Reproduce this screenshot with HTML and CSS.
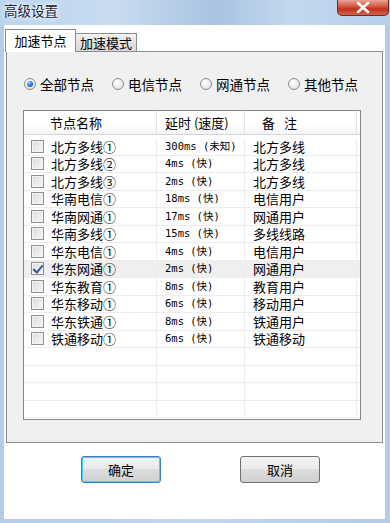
FILE: index.html
```html
<!DOCTYPE html>
<html lang="zh-CN">
<head>
    <meta charset="UTF-8">
    <meta name="viewport" content="width=device-width, initial-scale=1.0">
    <title>高级设置</title>
    <link rel="stylesheet" href="styles.css">
</head>
<body>
    <div class="window">
        <div class="titlebar">
            <div class="title">高级设置</div>
            <div class="close">
                <svg width="14" height="11" viewBox="0 0 14 11"><path d="M2 1 L12 10 M12 1 L2 10" stroke="#fff" stroke-width="2.6" stroke-linecap="round"/></svg>
            </div>
        </div>
        <div class="client">
            <div class="tabs">
                <div class="tab active">加速节点</div>
                <div class="tab">加速模式</div>
            </div>
            <div class="pane">
                <div class="radios">
                    <label class="option"><span class="radio checked"></span>全部节点</label>
                    <label class="option"><span class="radio"></span>电信节点</label>
                    <label class="option"><span class="radio"></span>网通节点</label>
                    <label class="option"><span class="radio"></span>其他节点</label>
                </div>
                <div class="list">
                    <div class="head">
                        <div class="hcell name">节点名称</div>
                        <div class="hcell delay">延时 (速度)</div>
                        <div class="hcell note">备 注</div>
                        <div class="hcell"></div>
                    </div>
                    <div class="rows" id="rows"></div>
                </div>
            </div>
            <div class="buttons">
                <div class="btn focus">确定</div>
                <div class="btn">取消</div>
            </div>
        </div>
    </div>

    <script>
const nodes = [
    ['北方多线①', '300ms (未知)', '北方多线'],
    ['北方多线②', '4ms (快)', '北方多线'],
    ['北方多线③', '2ms (快)', '北方多线'],
    ['华南电信①', '18ms (快)', '电信用户'],
    ['华南网通①', '17ms (快)', '网通用户'],
    ['华南多线①', '15ms (快)', '多线线路'],
    ['华东电信①', '4ms (快)', '电信用户'],
    ['华东网通①', '2ms (快)', '网通用户', true],
    ['华东教育①', '8ms (快)', '教育用户'],
    ['华东移动①', '6ms (快)', '移动用户'],
    ['华东铁通①', '8ms (快)', '铁通用户'],
    ['铁通移动①', '6ms (快)', '铁通移动']
];

const rows = document.getElementById('rows');

nodes.forEach(n => {
    const row = document.createElement('div');
    row.className = 'row' + (n[3] ? ' selected' : '');
    row.innerHTML =
        '<div class="cell name"><span class="check' + (n[3] ? ' on' : '') + '"></span>' + n[0] + '</div>' +
        '<div class="cell delay">' + n[1] + '</div>' +
        '<div class="cell note">' + n[2] + '</div>' +
        '<div class="cell"></div>';
    rows.appendChild(row);
});

// empty rows to fill the list
for (let i = 0; i < 4; i++) {
    const row = document.createElement('div');
    row.className = 'row';
    row.innerHTML = '<div class="cell"></div><div class="cell"></div><div class="cell"></div><div class="cell"></div>';
    rows.appendChild(row);
}
    </script>
</body>
</html>
```

FILE: styles.css
```css
body {
    margin: 0;
    font-family: "Noto Sans CJK SC", "Noto Sans", sans-serif;
    color: #000;
}
.window {
    width: 390px;
    height: 523px;
    box-sizing: border-box;
    display: flex;
    flex-direction: column;
    padding: 0 5px 4px 4px;
    background: linear-gradient(90deg, #b3cdea, #c2d7ee 50%, #b1cbe8);
}
.titlebar {
    height: 25px;
    flex: none;
    margin: 0 -5px 0 -4px;
    display: flex;
    justify-content: space-between;
    align-items: flex-start;
    background: linear-gradient(90deg, #bdd4ee 0%, #c9dcf0 30%, #a9c3e2 55%, #c4d8ef 75%, #b7cfea 100%);
}
.title {
    margin: 1px 0 0 4px;
    font-size: 13.5px;
    line-height: 18px;
    color: #1b2536;
    text-shadow: 0 0 6px #fff, 0 0 3px #fff;
}
.close {
    width: 52px;
    height: 16px;
    margin-right: 1px;
    box-sizing: border-box;
    border: 1px solid #6e2a22;
    border-top: none;
    border-radius: 0 0 5px 5px;
    background: linear-gradient(#e9a597, #d2533f 45%, #c0321f 60%, #d5624c);
    display: flex;
    align-items: center;
    justify-content: center;
}
.client {
    flex: 1;
    background: #fff;
    display: flex;
    flex-direction: column;
    padding: 4px 2px 0 1px;
}
.tabs {
    height: 22px;
    display: flex;
    align-items: flex-end;
}
.tab {
    height: 18px;
    width: 61px;
    box-sizing: border-box;
    border: 1px solid #898c95;
    border-bottom: none;
    border-left: none;
    background: linear-gradient(#f2f2f2, #e3e3e3 50%, #d9d9d9);
    font-size: 13px;
    line-height: 18px;
    text-align: center;
}
.tab.active {
    position: relative;
    z-index: 1;
    width: 71px;
    height: 23px;
    margin-bottom: -1px;
    border-left: 1px solid #898c95;
    background: #fff;
    line-height: 22px;
}
.pane {
    height: 392px;
    margin-left: 1px;
    box-sizing: border-box;
    border: 1px solid #898c95;
    background: #f0f0f0;
    padding: 0 0 0 16px;
}
.radios {
    display: flex;
    margin: 24px 0 0 1px;
    height: 16px;
    align-items: center;
}
.option {
    width: 88px;
    display: flex;
    align-items: center;
    font-size: 13.5px;
    line-height: 16px;
}
.radio {
    width: 12px;
    height: 12px;
    box-sizing: border-box;
    border-radius: 50%;
    border: 1px solid #8b8b8b;
    background: radial-gradient(circle at 40% 35%, #fff, #dcdcdc);
    margin-right: 4px;
    flex: none;
    display: flex;
    align-items: center;
    justify-content: center;
}
.radio.checked::after {
    content: "";
    width: 6px;
    height: 6px;
    border-radius: 50%;
    background: radial-gradient(circle at 35% 30%, #8fd0ff, #1b6fc2 60%, #0f4c99);
}
.list {
    margin-top: 18px;
    width: 338px;
    height: 310px;
    box-sizing: border-box;
    border: 1px solid #828790;
    background: #fff;
}
.head,
.row {
    display: grid;
    grid-template-columns: 133px 88px 112px 1fr;
}
.head {
    height: 23px;
    margin-bottom: 3px;
    background: linear-gradient(#fff 60%, #f4f5f7);
    border-bottom: 1px solid #d5d5d5;
}
.hcell {
    border-right: 1px solid #e5e5e5;
    font-size: 13px;
    line-height: 23px;
}
.hcell:last-child,
.cell:last-child {
    border-right: none;
}
.hcell.name {
    padding-left: 26px;
}
.hcell.delay {
    padding-left: 8px;
}
.hcell.note {
    padding-left: 17px;
    word-spacing: 6px;
}
.row {
    height: 17.5px;
}
.row.selected {
    background: #efefef;
}
.cell {
    border-right: 1px solid #ececec;
    border-bottom: 1px solid #ececec;
    font-size: 13px;
    line-height: 17px;
    display: flex;
    align-items: center;
    white-space: nowrap;
    overflow: hidden;
}
.cell.name {
    padding-left: 7px;
}
.cell.delay {
    padding-left: 8px;
    font-family: "DejaVu Sans Mono", "Noto Sans CJK SC", monospace;
    font-size: 10.5px;
}
.cell.note {
    padding-left: 8px;
}
.check {
    width: 13px;
    height: 13px;
    box-sizing: border-box;
    border: 1px solid #8f8f8f;
    background: linear-gradient(135deg, #dcdcdc, #f7f7f7);
    box-shadow: inset 0 0 0 1px #f4f4f4;
    margin-right: 7px;
    flex: none;
    position: relative;
}
.check.on::after {
    content: "";
    position: absolute;
    left: 3px;
    top: 0;
    width: 4px;
    height: 8px;
    border: solid #3a53a8;
    border-width: 0 2px 2px 0;
    transform: rotate(40deg);
}
.buttons {
    display: flex;
    gap: 79px;
    padding: 13px 0 0 76px;
}
.btn {
    width: 80px;
    height: 27px;
    box-sizing: border-box;
    border: 1px solid #707070;
    border-radius: 3px;
    background: linear-gradient(#f2f2f2, #ebebeb 45%, #dddddd 50%, #cfcfcf);
    font-size: 13px;
    line-height: 25px;
    text-align: center;
}
.btn.focus {
    border-color: #3c7fb1;
    box-shadow: inset 0 0 0 1px #48d0f8;
}
```
